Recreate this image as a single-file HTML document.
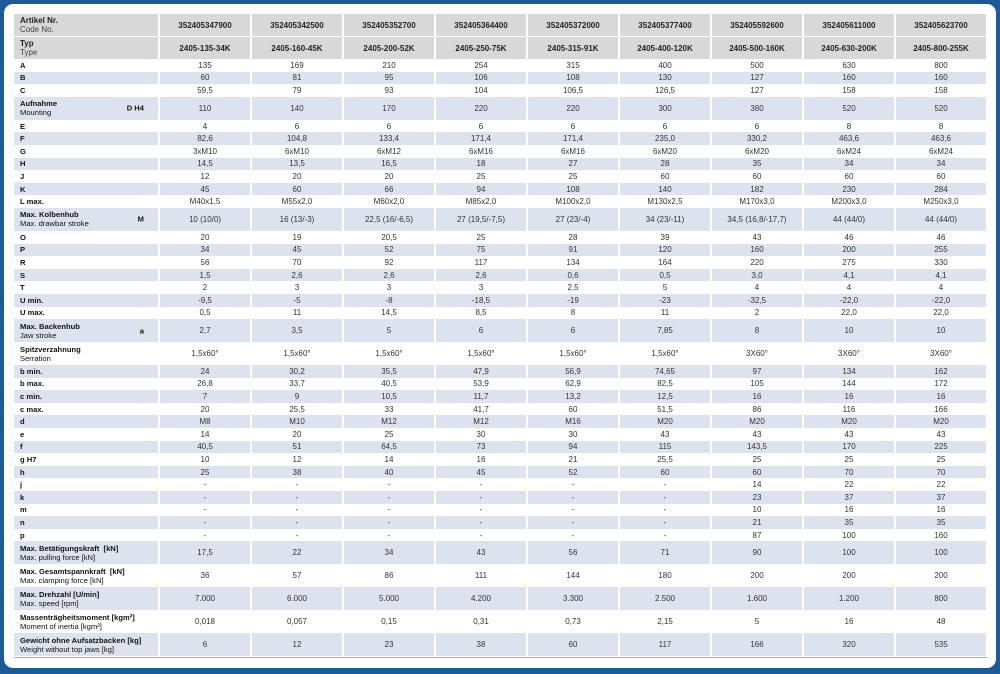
<!DOCTYPE html>
<html><head><meta charset="utf-8"><style>
html,body{margin:0;padding:0;}
body{width:1000px;height:674px;background:#1d5a98;position:relative;overflow:hidden;font-family:"Liberation Sans",sans-serif;}
.panel{position:absolute;left:4px;top:4px;width:992px;height:664px;background:#fff;border-radius:9px;}
table{position:absolute;left:14px;top:14px;border-collapse:separate;border-spacing:2px 0;margin-left:-2px;}
td{font-size:8px;color:#333;text-align:center;padding:0;height:12.6px;line-height:9px;white-space:nowrap;}
td.l{text-align:left;padding-left:6px;width:138px;color:#111;position:relative;font-size:7.6px;}
td.v{width:90px;}
tr.s td{background:#dde3ee;}
tr.h td{background:#d8d8d8;font-weight:bold;color:#222;font-size:8px;}
tr.h1 td{height:22px;}
tr.h2 td{height:22px;border-top:1px solid #fff;}
tr.d td{height:23px;}
b{color:#111;}
.sub{font-weight:normal;color:#444;}
.tag{position:absolute;right:14px;top:50%;transform:translateY(-50%);font-weight:bold;}
.line{position:absolute;left:14px;top:657px;width:973px;height:1px;background:#aab;}
</style></head><body>
<div class="panel"></div>
<table>
<tr class="h h1"><td class="l">Artikel Nr.<br><span class="sub">Code No.</span></td><td class="v">352405347900</td><td class="v">352405342500</td><td class="v">352405352700</td><td class="v">352405364400</td><td class="v">352405372000</td><td class="v">352405377400</td><td class="v">352405592600</td><td class="v">352405611000</td><td class="v">352405623700</td></tr>
<tr class="h h2"><td class="l">Typ<br><span class="sub">Type</span></td><td>2405-135-34K</td><td>2405-160-45K</td><td>2405-200-52K</td><td>2405-250-75K</td><td>2405-315-91K</td><td>2405-400-120K</td><td>2405-500-160K</td><td>2405-630-200K</td><td>2405-800-255K</td></tr>
<tr><td class="l"><b>A</b></td><td>135</td><td>169</td><td>210</td><td>254</td><td>315</td><td>400</td><td>500</td><td>630</td><td>800</td></tr>
<tr class="s"><td class="l"><b>B</b></td><td>60</td><td>81</td><td>95</td><td>106</td><td>108</td><td>130</td><td>127</td><td>160</td><td>160</td></tr>
<tr><td class="l"><b>C</b></td><td>59,5</td><td>79</td><td>93</td><td>104</td><td>106,5</td><td>126,5</td><td>127</td><td>158</td><td>158</td></tr>
<tr class="s d"><td class="l"><b>Aufnahme</b><br>Mounting<span class="tag">D H4</span></td><td>110</td><td>140</td><td>170</td><td>220</td><td>220</td><td>300</td><td>380</td><td>520</td><td>520</td></tr>
<tr><td class="l"><b>E</b></td><td>4</td><td>6</td><td>6</td><td>6</td><td>6</td><td>6</td><td>6</td><td>8</td><td>8</td></tr>
<tr class="s"><td class="l"><b>F</b></td><td>82,6</td><td>104,8</td><td>133,4</td><td>171,4</td><td>171,4</td><td>235,0</td><td>330,2</td><td>463,6</td><td>463,6</td></tr>
<tr><td class="l"><b>G</b></td><td>3xM10</td><td>6xM10</td><td>6xM12</td><td>6xM16</td><td>6xM16</td><td>6xM20</td><td>6xM20</td><td>6xM24</td><td>6xM24</td></tr>
<tr class="s"><td class="l"><b>H</b></td><td>14,5</td><td>13,5</td><td>16,5</td><td>18</td><td>27</td><td>28</td><td>35</td><td>34</td><td>34</td></tr>
<tr><td class="l"><b>J</b></td><td>12</td><td>20</td><td>20</td><td>25</td><td>25</td><td>60</td><td>60</td><td>60</td><td>60</td></tr>
<tr class="s"><td class="l"><b>K</b></td><td>45</td><td>60</td><td>66</td><td>94</td><td>108</td><td>140</td><td>182</td><td>230</td><td>284</td></tr>
<tr><td class="l"><b>L max.</b></td><td>M40x1,5</td><td>M55x2,0</td><td>M60x2,0</td><td>M85x2,0</td><td>M100x2,0</td><td>M130x2,5</td><td>M170x3,0</td><td>M200x3,0</td><td>M250x3,0</td></tr>
<tr class="s d"><td class="l"><b>Max. Kolbenhub</b><br>Max. drawbar stroke<span class="tag">M</span></td><td>10 (10/0)</td><td>16 (13/-3)</td><td>22,5 (16/-6,5)</td><td>27 (19,5/-7,5)</td><td>27 (23/-4)</td><td>34 (23/-11)</td><td>34,5 (16,8/-17,7)</td><td>44 (44/0)</td><td>44 (44/0)</td></tr>
<tr><td class="l"><b>O</b></td><td>20</td><td>19</td><td>20,5</td><td>25</td><td>28</td><td>39</td><td>43</td><td>46</td><td>46</td></tr>
<tr class="s"><td class="l"><b>P</b></td><td>34</td><td>45</td><td>52</td><td>75</td><td>91</td><td>120</td><td>160</td><td>200</td><td>255</td></tr>
<tr><td class="l"><b>R</b></td><td>56</td><td>70</td><td>92</td><td>117</td><td>134</td><td>164</td><td>220</td><td>275</td><td>330</td></tr>
<tr class="s"><td class="l"><b>S</b></td><td>1,5</td><td>2,6</td><td>2,6</td><td>2,6</td><td>0,6</td><td>0,5</td><td>3,0</td><td>4,1</td><td>4,1</td></tr>
<tr><td class="l"><b>T</b></td><td>2</td><td>3</td><td>3</td><td>3</td><td>2,5</td><td>5</td><td>4</td><td>4</td><td>4</td></tr>
<tr class="s"><td class="l"><b>U min.</b></td><td>-9,5</td><td>-5</td><td>-8</td><td>-18,5</td><td>-19</td><td>-23</td><td>-32,5</td><td>-22,0</td><td>-22,0</td></tr>
<tr><td class="l"><b>U max.</b></td><td>0,5</td><td>11</td><td>14,5</td><td>8,5</td><td>8</td><td>11</td><td>2</td><td>22,0</td><td>22,0</td></tr>
<tr class="s d"><td class="l"><b>Max. Backenhub</b><br>Jaw stroke<span class="tag">a</span></td><td>2,7</td><td>3,5</td><td>5</td><td>6</td><td>6</td><td>7,85</td><td>8</td><td>10</td><td>10</td></tr>
<tr class="d"><td class="l"><b>Spitzverzahnung</b><br>Serration</td><td>1,5x60°</td><td>1,5x60°</td><td>1,5x60°</td><td>1,5x60°</td><td>1,5x60°</td><td>1,5x60°</td><td>3X60°</td><td>3X60°</td><td>3X60°</td></tr>
<tr class="s"><td class="l"><b>b min.</b></td><td>24</td><td>30,2</td><td>35,5</td><td>47,9</td><td>56,9</td><td>74,65</td><td>97</td><td>134</td><td>162</td></tr>
<tr><td class="l"><b>b max.</b></td><td>26,8</td><td>33,7</td><td>40,5</td><td>53,9</td><td>62,9</td><td>82,5</td><td>105</td><td>144</td><td>172</td></tr>
<tr class="s"><td class="l"><b>c min.</b></td><td>7</td><td>9</td><td>10,5</td><td>11,7</td><td>13,2</td><td>12,5</td><td>16</td><td>16</td><td>16</td></tr>
<tr><td class="l"><b>c max.</b></td><td>20</td><td>25,5</td><td>33</td><td>41,7</td><td>60</td><td>51,5</td><td>86</td><td>116</td><td>166</td></tr>
<tr class="s"><td class="l"><b>d</b></td><td>M8</td><td>M10</td><td>M12</td><td>M12</td><td>M16</td><td>M20</td><td>M20</td><td>M20</td><td>M20</td></tr>
<tr><td class="l"><b>e</b></td><td>14</td><td>20</td><td>25</td><td>30</td><td>30</td><td>43</td><td>43</td><td>43</td><td>43</td></tr>
<tr class="s"><td class="l"><b>f</b></td><td>40,5</td><td>51</td><td>64,5</td><td>73</td><td>94</td><td>115</td><td>143,5</td><td>170</td><td>225</td></tr>
<tr><td class="l"><b>g H7</b></td><td>10</td><td>12</td><td>14</td><td>16</td><td>21</td><td>25,5</td><td>25</td><td>25</td><td>25</td></tr>
<tr class="s"><td class="l"><b>h</b></td><td>25</td><td>38</td><td>40</td><td>45</td><td>52</td><td>60</td><td>60</td><td>70</td><td>70</td></tr>
<tr><td class="l"><b>j</b></td><td>-</td><td>-</td><td>-</td><td>-</td><td>-</td><td>-</td><td>14</td><td>22</td><td>22</td></tr>
<tr class="s"><td class="l"><b>k</b></td><td>-</td><td>-</td><td>-</td><td>-</td><td>-</td><td>-</td><td>23</td><td>37</td><td>37</td></tr>
<tr><td class="l"><b>m</b></td><td>-</td><td>-</td><td>-</td><td>-</td><td>-</td><td>-</td><td>10</td><td>16</td><td>16</td></tr>
<tr class="s"><td class="l"><b>n</b></td><td>-</td><td>-</td><td>-</td><td>-</td><td>-</td><td>-</td><td>21</td><td>35</td><td>35</td></tr>
<tr><td class="l"><b>p</b></td><td>-</td><td>-</td><td>-</td><td>-</td><td>-</td><td>-</td><td>87</td><td>100</td><td>160</td></tr>
<tr class="s d"><td class="l"><b>Max. Betätigungskraft &nbsp;[kN]</b><br>Max. pulling force [kN]</td><td>17,5</td><td>22</td><td>34</td><td>43</td><td>56</td><td>71</td><td>90</td><td>100</td><td>100</td></tr>
<tr class="d"><td class="l"><b>Max. Gesamtspannkraft &nbsp;[kN]</b><br>Max. clamping force [kN]</td><td>36</td><td>57</td><td>86</td><td>111</td><td>144</td><td>180</td><td>200</td><td>200</td><td>200</td></tr>
<tr class="s d"><td class="l"><b>Max. Drehzahl [U/min]</b><br>Max. speed [rpm]</td><td>7.000</td><td>6.000</td><td>5.000</td><td>4.200</td><td>3.300</td><td>2.500</td><td>1.600</td><td>1.200</td><td>800</td></tr>
<tr class="d"><td class="l"><b>Massenträgheitsmoment [kgm²]</b><br>Moment of inertia [kgm²]</td><td>0,018</td><td>0,057</td><td>0,15</td><td>0,31</td><td>0,73</td><td>2,15</td><td>5</td><td>16</td><td>48</td></tr>
<tr class="s d"><td class="l"><b>Gewicht ohne Aufsatzbacken [kg]</b><br>Weight without top jaws [kg]</td><td>6</td><td>12</td><td>23</td><td>38</td><td>60</td><td>117</td><td>166</td><td>320</td><td>535</td></tr>
</table>
<div class="line"></div>
</body></html>
